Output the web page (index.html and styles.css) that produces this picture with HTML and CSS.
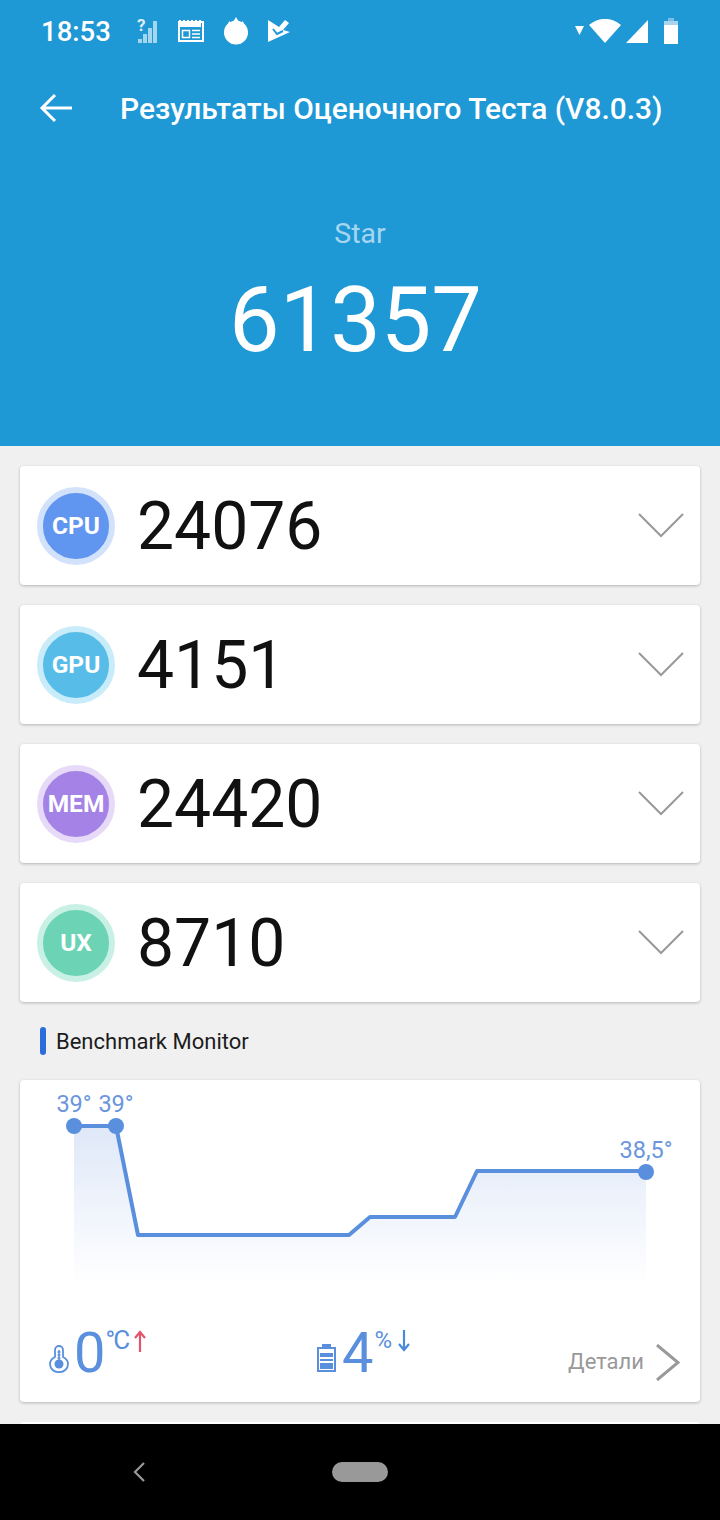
FILE: index.html
```html
<!DOCTYPE html>
<html lang="ru">
<head>
    <meta charset="UTF-8">
    <meta name="viewport" content="width=device-width, initial-scale=1.0">
    <title>Результаты Оценочного Теста</title>
    <link rel="stylesheet" href="styles.css">
</head>
<body>
    <header class="hero">
        <div class="status-bar">
            <span class="clock">18:53</span>
            <div class="status-left">
                <!-- no-sim signal -->
                <svg class="ico-signal" width="22" height="38" viewBox="0 -6 22 38">
                    <path d="M1 25h4v-4H1zM6 25h4v-9H6zM11 25h4V10h-4zM16 25h4V3h-4z" fill="#fff" opacity=".6"/>
                    <text x="0" y="13" class="sim-mark">?</text>
                </svg>
                <!-- calendar -->
                <svg width="26" height="24" viewBox="0 0 26 24">
                    <rect x="1" y="3" width="24" height="19" fill="none" stroke="#fff" stroke-width="2"/>
                    <path d="M1 1h2v1h2V1h2v1h2V1h2v1h2V1h2v1h2V1h2v1h2V1h2v7H1z" fill="#fff"/>
                    <rect x="4.500" y="11.500" width="7" height="7" fill="none" stroke="#fff" stroke-width="1.500"/>
                    <path d="M14 11.500h8M14 15h8M14 18.500h8" stroke="#fff" stroke-width="1.500"/>
                </svg>
                <!-- flame -->
                <svg width="26" height="28" viewBox="0 0 26 28">
                    <circle cx="13" cy="15.500" r="12" fill="#fff"/>
                    <path d="M5 8l1-4 3 3 4-7 4 7 3-3 1 4z" fill="#fff"/>
                </svg>
                <!-- check flag -->
                <svg width="22" height="24" viewBox="0 0 22 24">
                    <path d="M0 1l11 7 6-7 4 3-6 7 7 2L0 23z" fill="#fff"/>
                    <path d="M5 10l4 5 6-3" fill="none" stroke="#1f98d6" stroke-width="2"/>
                </svg>
            </div>
            <div class="status-right">
                <svg width="9" height="10" viewBox="0 0 9 10"><path d="M0 0h9L4.500 9z" fill="#fff"/></svg>
                <svg width="32" height="24" viewBox="0 0 32 24"><path d="M0 6a24 24 0 0 1 32 0L16 24z" fill="#fff"/></svg>
                <svg width="22" height="23" viewBox="0 0 22 23"><path d="M22 0v23H0z" fill="#fff"/></svg>
                <svg class="ico-batt" width="14" height="26" viewBox="0 0 14 26">
                    <path d="M4 0h6v3H4z" fill="#7fbde6"/>
                    <path d="M0 3h14v4H0z" fill="#a9d3ee"/>
                    <path d="M0 7h14v19H0z" fill="#fff"/>
                </svg>
            </div>
        </div>
        <div class="toolbar">
            <svg class="back" width="34" height="32" viewBox="0 0 34 32">
                <path d="M33 16H3M16 3L3 16l13 13" fill="none" stroke="#fff" stroke-width="3"/>
            </svg>
            <h1 class="title">Результаты Оценочного Теста (V8.0.3)</h1>
        </div>
        <div class="device">Star</div>
        <div class="total">61357</div>
    </header>

    <main class="content">
        <section class="score-card">
            <div class="badge badge-cpu">CPU</div>
            <div class="score">24076</div>
            <svg class="chevron" width="46" height="25" viewBox="0 0 46 25"><path d="M1 1l22 22L45 1" fill="none" stroke="#999" stroke-width="2"/></svg>
        </section>
        <section class="score-card">
            <div class="badge badge-gpu">GPU</div>
            <div class="score">4151</div>
            <svg class="chevron" width="46" height="25" viewBox="0 0 46 25"><path d="M1 1l22 22L45 1" fill="none" stroke="#999" stroke-width="2"/></svg>
        </section>
        <section class="score-card">
            <div class="badge badge-mem">MEM</div>
            <div class="score">24420</div>
            <svg class="chevron" width="46" height="25" viewBox="0 0 46 25"><path d="M1 1l22 22L45 1" fill="none" stroke="#999" stroke-width="2"/></svg>
        </section>
        <section class="score-card">
            <div class="badge badge-ux">UX</div>
            <div class="score">8710</div>
            <svg class="chevron" width="46" height="25" viewBox="0 0 46 25"><path d="M1 1l22 22L45 1" fill="none" stroke="#999" stroke-width="2"/></svg>
        </section>

        <h2 class="section-title">Benchmark Monitor</h2>

        <section class="monitor">
            <svg class="chart" width="680" height="230" viewBox="0 0 680 230">
                <defs>
                    <linearGradient id="chart-fill" x1="0" y1="46" x2="0" y2="205" gradientUnits="userSpaceOnUse">
                        <stop offset="0" stop-color="#dfe8f8"/>
                        <stop offset="1" stop-color="#ffffff"/>
                    </linearGradient>
                </defs>
                <path d="M54 46H96L118 155H329L350 137H435L457 91H626V205H54z" fill="url(#chart-fill)"/>
                <path d="M54 46H96L118 155H329L350 137H435L457 91H626" fill="none" stroke="#5a8fdd" stroke-width="4" stroke-linejoin="round"/>
                <circle cx="54" cy="46" r="8" fill="#5a8fdd"/>
                <circle cx="96" cy="46" r="8" fill="#5a8fdd"/>
                <circle cx="626" cy="92" r="8" fill="#5a8fdd"/>
                <text x="54" y="32" text-anchor="middle" class="temp">39°</text>
                <text x="96" y="32" text-anchor="middle" class="temp">39°</text>
                <text x="626" y="78" text-anchor="middle" class="temp">38,5°</text>
            </svg>
            <div class="monitor-footer">
                <div class="stat stat-temp">
                    <svg width="20" height="29" viewBox="0 0 20 29">
                        <path d="M6 13V6a4 4 0 0 1 8 0v7c3 1.500 5 4 5 7a8 8 0 0 1-9 8 8 8 0 0 1-9-8c0-3 2-5.500 5-7z" fill="none" stroke="#5a8fdd" stroke-width="1.800"/>
                        <circle cx="10" cy="20" r="4.500" fill="#5a8fdd"/>
                        <path d="M10 6v12M8.500 8h3M8.500 11h3M8.500 14h3" stroke="#5a8fdd" stroke-width="1.500"/>
                    </svg>
                    <span class="stat-value">0</span>
                    <span class="stat-unit">°C</span>
                    <svg class="stat-arrow" width="12" height="22" viewBox="0 0 12 22"><path d="M6 22V2M1 8l5-6 5 6" fill="none" stroke="#e2556a" stroke-width="2.200"/></svg>
                </div>
                <div class="stat stat-batt">
                    <svg width="19" height="28" viewBox="0 0 19 28">
                        <path d="M5 0h9v3H5z" fill="#5a8fdd"/>
                        <path d="M1 4h17v23H1z" fill="none" stroke="#5a8fdd" stroke-width="2"/>
                        <path d="M3 9h13v4H3zM3 15h13v2H3zM3 19h13v6H3z" fill="#5a8fdd"/>
                    </svg>
                    <span class="stat-value">4</span>
                    <span class="stat-unit stat-unit-pct">%</span>
                    <svg class="stat-arrow" width="12" height="22" viewBox="0 0 12 22"><path d="M6 0v20M1 14l5 6 5-6" fill="none" stroke="#4a8ad8" stroke-width="2.200"/></svg>
                </div>
                <div class="details">
                    <span class="details-label">Детали</span>
                    <svg width="24" height="37" viewBox="0 0 24 37"><path d="M1 1l21 17.500L1 36" fill="none" stroke="#999" stroke-width="3"/></svg>
                </div>
            </div>
        </section>
        <div class="next-card"></div>
    </main>

    <nav class="nav-bar">
        <svg width="14" height="22" viewBox="0 0 14 22"><path d="M12 2L3 11l9 9" fill="none" stroke="#999" stroke-width="2.200"/></svg>
        <div class="home-pill"></div>
    </nav>
</body>
</html>
```

FILE: styles.css
```css
* {
    box-sizing: border-box;
}
html, body {
    margin: 0;
    height: 1520px;
    overflow: hidden;
}
body {
    display: flex;
    flex-direction: column;
    font-family: Roboto, "Liberation Sans", sans-serif;
    background-color: #f0f0f0;
}

/* blue header */
.hero {
    height: 446px;
    flex: none;
    background-color: #1f98d6;
    color: #fff;
    text-align: center;
}
.status-bar {
    display: flex;
    align-items: center;
    height: 62px;
    padding: 0 42px 0 41px;
}
.clock {
    font-size: 27.500px;
    font-weight: 500;
    width: 96px;
    text-align: left;
}
.status-left {
    display: flex;
    align-items: center;
    gap: 19px;
}
.sim-mark {
    font-size: 17px;
    font-weight: 700;
    fill: #fff;
    opacity: .85;
}
.status-right {
    display: flex;
    align-items: center;
    gap: 5px;
    margin-left: auto;
}
.ico-batt {
    margin-left: 11px;
}
.toolbar {
    display: flex;
    align-items: center;
    height: 60px;
    margin-top: 16px;
    padding-left: 39px;
}
.back {
    flex: none;
}
.title {
    margin: 0 0 0 47px;
    font-size: 29.900px;
    font-weight: 500;
    white-space: nowrap;
}
.device {
    margin-top: 79px;
    font-size: 28.500px;
    line-height: 34px;
    color: #a7d6f0;
}
.total {
    margin-top: 18px;
    padding-right: 9px;
    font-size: 90px;
    line-height: 104px;
    font-weight: 400;
}

/* score list */
.content {
    flex: 1;
    overflow: hidden;
    padding: 20px 20px 0;
    display: flex;
    flex-direction: column;
}
.score-card {
    display: flex;
    align-items: center;
    height: 119px;
    flex: none;
    margin-bottom: 20px;
    padding: 0 16px 0 17px;
    background-color: #fff;
    border-radius: 4px;
    box-shadow: 0 1px 3px rgba(0, 0, 0, .25);
}
.badge {
    display: flex;
    align-items: center;
    justify-content: center;
    width: 78px;
    height: 78px;
    flex: none;
    border-radius: 50%;
    border: 6px solid;
    color: #fff;
    font-size: 24.500px;
    font-weight: 700;
}
.badge-cpu {
    background-color: #6095f0;
    border-color: #d3e2fb;
}
.badge-gpu {
    background-color: #58bce8;
    border-color: #c9ecfa;
}
.badge-mem {
    background-color: #a583e6;
    border-color: #e6daf8;
}
.badge-ux {
    background-color: #6cd4b5;
    border-color: #c8f0e4;
}
.score {
    margin-left: 22px;
    padding-top: 2px;
    font-size: 66px;
    color: #111;
}
.chevron {
    margin-left: auto;
}

/* monitor */
.section-title {
    display: flex;
    align-items: center;
    height: 28px;
    margin: 5px 0 25px 20px;
    font-size: 22px;
    font-weight: 400;
    color: #1c1c1c;
}
.section-title::before {
    content: "";
    width: 6px;
    height: 28px;
    margin-right: 10px;
    border-radius: 3px;
    background-color: #2a6ddb;
}
.monitor {
    flex: none;
    height: 322px;
    background-color: #fff;
    border-radius: 4px;
    box-shadow: 0 1px 3px rgba(0, 0, 0, .25);
}
.chart {
    display: block;
}
.temp {
    font-size: 23.500px;
    fill: #6b96dc;
}
.monitor-footer {
    display: grid;
    grid-template-columns: 268px 1fr auto;
    align-items: end;
    padding: 14px 20px 0 29px;
}
.stat {
    display: flex;
    align-items: flex-start;
    height: 58px;
    color: #5a8fdd;
}
.stat > svg:first-child {
    margin-top: 20px;
}
.stat-value {
    margin-left: 5px;
    font-size: 56px;
    line-height: 58px;
    font-weight: 400;
}
.stat-batt .stat-value {
    margin-left: 6px;
}
.stat-unit {
    margin: 1px 0 0 0;
    font-size: 26px;
    line-height: 30px;
    letter-spacing: -2px;
}
.stat-unit-pct {
    margin-left: 1px;
    font-size: 24px;
    letter-spacing: 0;
}
.stat-arrow {
    margin: 6px 0 0 6px;
}
.details {
    display: flex;
    align-items: center;
    gap: 12px;
    height: 37px;
    margin-bottom: 1px;
    font-size: 22px;
    color: #999;
}
.details-label {
    margin-bottom: 3px;
}
.next-card {
    flex: none;
    height: 20px;
    margin-top: 20px;
    background-color: #fff;
    border-radius: 4px;
}

/* system navigation */
.nav-bar {
    position: relative;
    display: flex;
    align-items: center;
    justify-content: center;
    height: 96px;
    flex: none;
    background-color: #000;
}
.nav-bar svg {
    position: absolute;
    left: 132px;
    top: 37px;
}
.home-pill {
    width: 56px;
    height: 20px;
    border-radius: 10px;
    background-color: #999;
}
```
